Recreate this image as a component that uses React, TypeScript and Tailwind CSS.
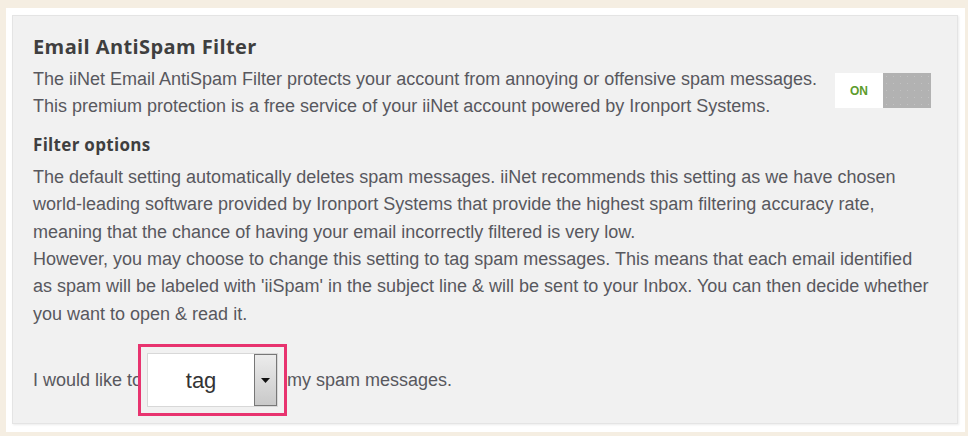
import React from 'react';

const body = "font-['Liberation_Sans',Arial,sans-serif]";
const heading = "font-['Open_Sans',sans-serif] font-bold text-[#3f3f3f]";

function Toggle() {
  return (
    <div className="flex h-[35px] w-[96px] shrink-0">
      <div className="flex w-[48px] items-center justify-center bg-white">
        <span className="font-['Liberation_Sans',Arial,sans-serif] text-[12px] font-bold text-[#5d9b2c]">ON</span>
      </div>
      <div className="w-[48px] bg-[#b2b2b2] bg-[radial-gradient(circle,#c2c2c2_0.8px,transparent_1px)] bg-[length:7px_7px]" />
    </div>
  );
}

function SpamSelect() {
  return (
    <div className="-ml-[4px] border-[3px] border-[#e8336f] bg-[#f1f1f1] p-[6px]">
      <div className="flex h-[54px] w-[131px] border border-[#d8d8d8] bg-white">
        <div className="flex flex-1 items-center justify-center text-[22px] text-[#333]">tag</div>
        <div className="flex w-[23px] items-center justify-center border border-[#777] bg-gradient-to-b from-[#ececec] to-[#c9c9c9]">
          <svg width="9" height="5" viewBox="0 0 9 5">
            <path d="M0 0h9L4.5 5z" fill="#111" />
          </svg>
        </div>
      </div>
    </div>
  );
}

export default function App() {
  return (
    <div className="h-[436px] w-[968px] bg-[#f5eee2] pl-[6px] pt-[8px]">
      <div className="h-[424px] w-[959px] bg-white pl-[6px] pt-[7px]">
        <div className={`h-[409px] w-[946px] border border-[#e4e4e4] bg-[#f1f1f1] pl-[20px] pr-[26px] pt-[19px] shadow-[1px_1px_2px_rgba(0,0,0,0.08)] ${body} text-[18px] text-[#58585e]`}>
          <h1 className={`${heading} text-[20px] leading-[24px] tracking-[0.4px]`}>Email AntiSpam Filter</h1>

          <div className="mt-[7px] flex items-start justify-between">
            <p className="leading-[27.4px]">
              The iiNet Email AntiSpam Filter protects your account from annoying or offensive spam messages.
              <br />
              This premium protection is a free service of your iiNet account powered by Ironport Systems.
            </p>
            <div className="mt-[7px]">
              <Toggle />
            </div>
          </div>

          <h2 className={`${heading} mt-[13px] text-[17px] leading-[22px] tracking-[0.3px]`}>Filter options</h2>

          <p className="mt-[8px] leading-[27.4px]">
            The default setting automatically deletes spam messages. iiNet recommends this setting as we have chosen
            <br />
            world-leading software provided by Ironport Systems that provide the highest spam filtering accuracy rate,
            <br />
            meaning that the chance of having your email incorrectly filtered is very low.
            <br />
            However, you may choose to change this setting to tag spam messages. This means that each email identified
            <br />
            as spam will be labeled with 'iiSpam' in the subject line &amp; will be sent to your Inbox. You can then decide whether
            <br />
            you want to open &amp; read it.
          </p>

          <div className="mt-[16px] flex items-center">
            <span>I would like to</span>
            <SpamSelect />
            <span>my spam messages.</span>
          </div>
        </div>
      </div>
    </div>
  );
}
